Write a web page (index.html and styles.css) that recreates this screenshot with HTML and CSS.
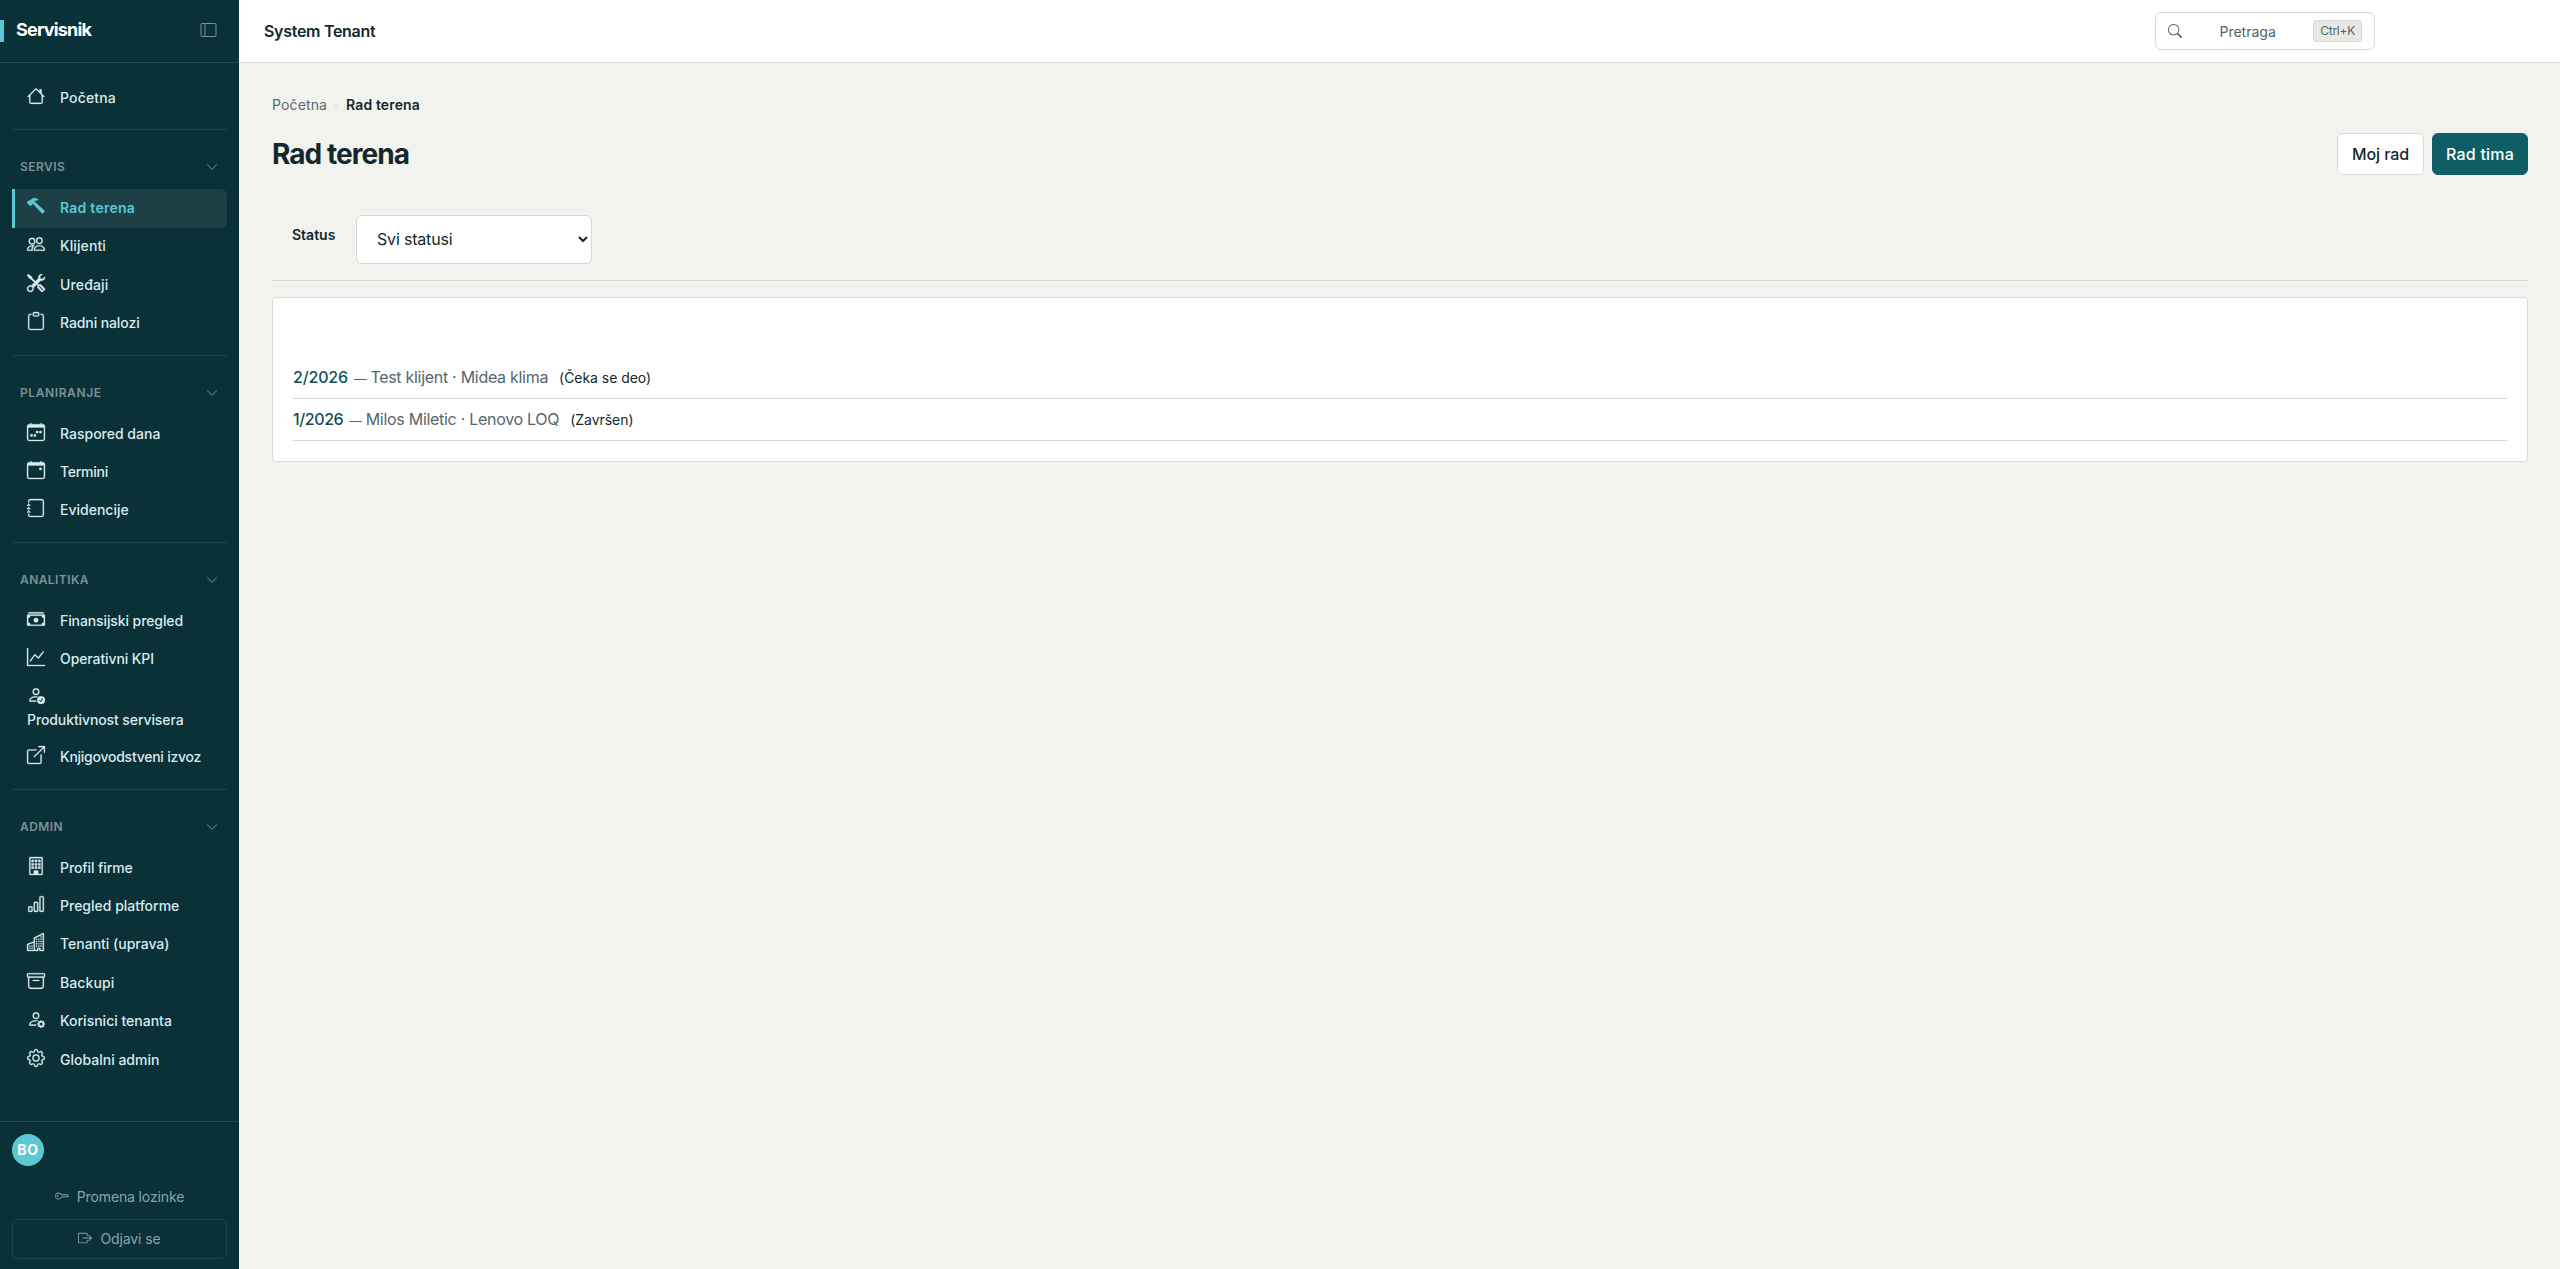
FILE: index.html
```html
<!DOCTYPE html>
<html lang="sr-Latn">
<head>
<meta charset="utf-8">
<title>Rad terena</title>
<link rel="stylesheet" href="styles.css">
</head>
<body>
<svg class="defs" xmlns="http://www.w3.org/2000/svg">
  <symbol id="chevron" viewBox="0 0 16 16"><path fill-rule="evenodd" d="M1.646 4.646a.5.5 0 0 1 .708 0L8 10.293l5.646-5.647a.5.5 0 0 1 .708.708l-6 6a.5.5 0 0 1-.708 0l-6-6a.5.5 0 0 1 0-.708z"/></symbol>
</svg>
<div class="app">
  <aside class="sidebar">
    <div class="brand">
      <span class="brand-mark"></span>
      <span class="brand-name">Servisnik</span>
      <svg class="toggle" viewBox="0 0 16 16"><path d="M0 3a2 2 0 0 1 2-2h12a2 2 0 0 1 2 2v10a2 2 0 0 1-2 2H2a2 2 0 0 1-2-2V3zm5-1v12h9a1 1 0 0 0 1-1V3a1 1 0 0 0-1-1H5zM4 2H2a1 1 0 0 0-1 1v10a1 1 0 0 0 1 1h2V2z"/></svg>
    </div>
    <nav class="nav">
      <section class="group">
        <a class="item"><svg class="icon" viewBox="0 0 16 16"><path fill-rule="evenodd" d="M2 13.5V7h1v6.5a.5.5 0 0 0 .5.5h9a.5.5 0 0 0 .5-.5V7h1v6.5a1.5 1.5 0 0 1-1.5 1.5h-9A1.5 1.5 0 0 1 2 13.5zm11-11V6l-2-2V2.500a.5.5 0 0 1 .5-.5h1a.5.5 0 0 1 .5.5z"/><path fill-rule="evenodd" d="M7.293 1.500a1 1 0 0 1 1.414 0l6.647 6.646a.5.5 0 0 1-.708.708L8 2.207 1.354 8.854a.5.5 0 1 1-.708-.708L7.293 1.500z"/></svg><span class="text wider">Početna</span></a>
      </section>
      <section class="group">
        <h2 class="label">SERVIS<svg class="chev"><use href="#chevron"/></svg></h2>
        <a class="item active"><svg class="icon" viewBox="0 0 16 16"><path d="M9.972 2.508a.5.5 0 0 0-.16-.556l-.178-.129a5 5 0 0 0-2.076-.783C6.215.862 4.504 1.229 2.840 3.133H1.786a.5.5 0 0 0-.354.147L.146 4.567a.5.5 0 0 0 0 .706l2.571 2.579a.5.5 0 0 0 .708 0l1.286-1.290a.5.5 0 0 0 .146-.353V5.570l8.387 8.873A.5.5 0 0 0 14 14.500l1.500-1.500a.5.5 0 0 0 .017-.689l-9.129-8.630c.747-.456 1.772-.839 3.112-.839a.5.5 0 0 0 .472-.334z"/></svg><span class="text">Rad terena</span></a>
        <a class="item"><svg class="icon" viewBox="0 0 16 16"><path d="M15 14s1 0 1-1-1-4-5-4-5 3-5 4 1 1 1 1h8Zm-7.978-1A.261.261 0 0 1 7 12.996c.001-.264.167-1.030.760-1.720C8.312 10.629 9.282 10 11 10c1.717 0 2.687.630 3.240 1.276.593.690.758 1.457.760 1.720l-.008.002a.274.274 0 0 1-.014.002H7.022ZM11 7a2 2 0 1 0 0-4 2 2 0 0 0 0 4Zm3-2a3 3 0 1 1-6 0 3 3 0 0 1 6 0ZM6.936 9.280a5.880 5.880 0 0 0-1.230-.247A7.350 7.350 0 0 0 5 9c-4 0-5 3-5 4 0 .667.333 1 1 1h4.216A2.238 2.238 0 0 1 5 13c0-1.010.377-2.042 1.090-2.904.243-.294.526-.569.846-.816ZM4.920 10A5.493 5.493 0 0 0 4 13H1c0-.260.164-1.030.760-1.724.545-.636 1.492-1.256 3.160-1.275ZM1.500 5.500a3 3 0 1 1 6 0 3 3 0 0 1-6 0Zm3-2a2 2 0 1 0 0 4 2 2 0 0 0 0-4Z"/></svg><span class="text wide">Klijenti</span></a>
        <a class="item"><svg class="icon" viewBox="0 0 16 16"><path d="M1 0 0 1l2.200 3.081a1 1 0 0 0 .815.419h.070a1 1 0 0 1 .708.293l2.675 2.675-2.617 2.654A3.003 3.003 0 0 0 0 13a3 3 0 1 0 5.878-.851l2.654-2.617.968.968-.305.914a1 1 0 0 0 .242 1.023l3.270 3.270a.997.997 0 0 0 1.414 0l1.586-1.586a.997.997 0 0 0 0-1.414l-3.270-3.270a1 1 0 0 0-1.023-.242L10.500 9.500l-.960-.960 2.680-2.643A3.005 3.005 0 0 0 16 3c0-.269-.035-.530-.102-.777l-2.140 2.141L12 4l-.364-1.757L13.777.102a3 3 0 0 0-3.675 3.680L7.462 6.460 4.793 3.793a1 1 0 0 1-.293-.707v-.071a1 1 0 0 0-.419-.814L1 0Zm9.646 10.646a.5.5 0 0 1 .708 0l2.914 2.915a.5.5 0 0 1-.707.707l-2.915-2.914a.5.5 0 0 1 0-.708ZM3 11l.471.242.529.026.287.445.445.287.026.529L5 13l-.242.471-.026.529-.445.287-.287.445-.529.026L3 15l-.471-.242L2 14.732l-.287-.445L1.268 14l-.026-.529L1 13l.242-.471.026-.529.445-.287.287-.445.529-.026L3 11Z"/></svg><span class="text wider">Uređaji</span></a>
        <a class="item"><svg class="icon" viewBox="0 0 16 16"><path d="M4 1.500H3a2 2 0 0 0-2 2V14a2 2 0 0 0 2 2h10a2 2 0 0 0 2-2V3.500a2 2 0 0 0-2-2h-1v1h1a1 1 0 0 1 1 1V14a1 1 0 0 1-1 1H3a1 1 0 0 1-1-1V3.500a1 1 0 0 1 1-1h1v-1z"/><path d="M9.500 1a.5.5 0 0 1 .5.5v1a.5.5 0 0 1-.5.5h-3a.5.5 0 0 1-.5-.5v-1a.5.5 0 0 1 .5-.5h3zm-3-1A1.500 1.500 0 0 0 5 1.500v1A1.500 1.500 0 0 0 6.500 4h3A1.500 1.500 0 0 0 11 2.500v-1A1.500 1.500 0 0 0 9.500 0h-3z"/></svg><span class="text tight">Radni nalozi</span></a>
      </section>
      <section class="group">
        <h2 class="label spread">PLANIRANJE<svg class="chev"><use href="#chevron"/></svg></h2>
        <a class="item"><svg class="icon" viewBox="0 0 16 16"><path d="M11 7.500a.5.5 0 0 1 .5-.5h1a.5.5 0 0 1 .5.5v1a.5.5 0 0 1-.5.5h-1a.5.5 0 0 1-.5-.5v-1zm-3 0a.5.5 0 0 1 .5-.5h1a.5.5 0 0 1 .5.5v1a.5.5 0 0 1-.5.5h-1a.5.5 0 0 1-.5-.5v-1zm-2 3a.5.5 0 0 1 .5-.5h1a.5.5 0 0 1 .5.5v1a.5.5 0 0 1-.5.5h-1a.5.5 0 0 1-.5-.5v-1zm-3 0a.5.5 0 0 1 .5-.5h1a.5.5 0 0 1 .5.5v1a.5.5 0 0 1-.5.5h-1a.5.5 0 0 1-.5-.5v-1z"/><path d="M3.500 0a.5.5 0 0 1 .5.5V1h8V.5a.5.5 0 0 1 1 0V1h1a2 2 0 0 1 2 2v11a2 2 0 0 1-2 2H2a2 2 0 0 1-2-2V3a2 2 0 0 1 2-2h1V.5a.5.5 0 0 1 .5-.5zM1 4v10a1 1 0 0 0 1 1h12a1 1 0 0 0 1-1V4H1z"/></svg><span class="text">Raspored dana</span></a>
        <a class="item"><svg class="icon" viewBox="0 0 16 16"><path d="M11 6.500a.5.5 0 0 1 .5-.5h1a.5.5 0 0 1 .5.5v1a.5.5 0 0 1-.5.5h-1a.5.5 0 0 1-.5-.5v-1z"/><path d="M3.500 0a.5.5 0 0 1 .5.5V1h8V.5a.5.5 0 0 1 1 0V1h1a2 2 0 0 1 2 2v11a2 2 0 0 1-2 2H2a2 2 0 0 1-2-2V3a2 2 0 0 1 2-2h1V.5a.5.5 0 0 1 .5-.5zM1 4v10a1 1 0 0 0 1 1h12a1 1 0 0 0 1-1V4H1z"/></svg><span class="text tighter">Termini</span></a>
        <a class="item"><svg class="icon" viewBox="0 0 16 16"><path d="M3 0h10a2 2 0 0 1 2 2v12a2 2 0 0 1-2 2H3a2 2 0 0 1-2-2v-1h1v1a1 1 0 0 0 1 1h10a1 1 0 0 0 1-1V2a1 1 0 0 0-1-1H3a1 1 0 0 0-1 1v1H1V2a2 2 0 0 1 2-2z"/><path d="M1 5v-.5a.5.5 0 0 1 1 0V5h.5a.5.5 0 0 1 0 1h-2a.5.5 0 0 1 0-1H1zm0 3v-.5a.5.5 0 0 1 1 0V8h.5a.5.5 0 0 1 0 1h-2a.5.5 0 0 1 0-1H1zm0 3v-.5a.5.5 0 0 1 1 0v.5h.5a.5.5 0 0 1 0 1h-2a.5.5 0 0 1 0-1H1z"/></svg><span class="text">Evidencije</span></a>
      </section>
      <section class="group">
        <h2 class="label">ANALITIKA<svg class="chev"><use href="#chevron"/></svg></h2>
        <a class="item"><svg class="icon" viewBox="0 0 16 16"><path d="M1 3a1 1 0 0 1 1-1h12a1 1 0 0 1 1 1H1zm7 8a2 2 0 1 0 0-4 2 2 0 0 0 0 4z"/><path d="M0 5a1 1 0 0 1 1-1h14a1 1 0 0 1 1 1v8a1 1 0 0 1-1 1H1a1 1 0 0 1-1-1V5zm3 0a2 2 0 0 1-2 2v4a2 2 0 0 1 2 2h10a2 2 0 0 1 2-2V7a2 2 0 0 1-2-2H3z"/></svg><span class="text tight">Finansijski pregled</span></a>
        <a class="item"><svg class="icon" viewBox="0 0 16 16"><path fill-rule="evenodd" d="M0 0h1v15h15v1H0V0Zm14.817 3.113a.5.5 0 0 1 .070.704l-4.500 5.500a.5.5 0 0 1-.740.037L7.060 6.767l-3.656 5.027a.5.5 0 0 1-.808-.588l4-5.500a.5.5 0 0 1 .758-.060l2.609 2.610 4.150-5.073a.5.5 0 0 1 .704-.070Z"/></svg><span class="text tight">Operativni KPI</span></a>
        <a class="item stacked"><svg class="icon" viewBox="0 0 16 16"><path d="M12.500 16a3.500 3.500 0 1 0 0-7 3.500 3.500 0 0 0 0 7Zm1.679-4.493-1.335 2.226a.75.75 0 0 1-1.174.144l-.774-.773a.5.5 0 0 1 .708-.708l.547.548 1.170-1.951a.5.5 0 1 1 .858.514ZM11 5a3 3 0 1 1-6 0 3 3 0 0 1 6 0ZM8 7a2 2 0 1 0 0-4 2 2 0 0 0 0 4Z"/><path d="M8.256 14a4.474 4.474 0 0 1-.229-1.004H3c.001-.246.154-.986.832-1.664C4.484 10.680 5.711 10 8 10c.260 0 .507.009.740.025.226-.341.496-.650.804-.918C9.077 9.038 8.564 9 8 9c-5 0-6 3-6 4s1 1 1 1h5.256Z"/></svg><span class="text tight">Produktivnost servisera</span></a>
        <a class="item"><svg class="icon" viewBox="0 0 16 16"><path fill-rule="evenodd" d="M8.636 3.500a.5.5 0 0 0-.5-.5H1.500A1.500 1.500 0 0 0 0 4.500v10A1.500 1.500 0 0 0 1.500 16h10a1.500 1.500 0 0 0 1.500-1.500V7.864a.5.5 0 0 0-1 0V14.500a.5.5 0 0 1-.5.5h-10a.5.5 0 0 1-.5-.5v-10a.5.5 0 0 1 .5-.5h6.636a.5.5 0 0 0 .5-.5z"/><path fill-rule="evenodd" d="M16 .5a.5.5 0 0 0-.5-.5h-5a.5.5 0 0 0 0 1h3.793L6.146 9.146a.5.5 0 1 0 .708.708L15 1.707V5.500a.5.5 0 0 0 1 0v-5z"/></svg><span class="text tighter">Knjigovodstveni izvoz</span></a>
      </section>
      <section class="group">
        <h2 class="label">ADMIN<svg class="chev"><use href="#chevron"/></svg></h2>
        <a class="item"><svg class="icon" viewBox="0 0 16 16"><path fill-rule="evenodd" d="M3 0h10a1 1 0 0 1 1 1v14a1 1 0 0 1-1 1H3a1 1 0 0 1-1-1V1a1 1 0 0 1 1-1zm0 1v14h3v-2.500a.5.5 0 0 1 .5-.5h3a.5.5 0 0 1 .5.5V15h3V1H3z"/><path d="M4 2.500h2v2H4zm3 0h2v2H7zm3 0h2v2h-2zm-6 3h2v2H4zm3 0h2v2H7zm3 0h2v2h-2zm-6 3h2v2H4zm3 0h2v2H7zm3 0h2v2h-2zM6.500 12.500h3V15h-3z"/></svg><span class="text tight">Profil firme</span></a>
        <a class="item"><svg class="icon" viewBox="0 0 16 16"><path d="M4 11H2v3h2v-3zm5-4H7v7h2V7zm5-5v12h-2V2h2zm-2-1a1 1 0 0 0-1 1v12a1 1 0 0 0 1 1h2a1 1 0 0 0 1-1V2a1 1 0 0 0-1-1h-2zM6 7a1 1 0 0 1 1-1h2a1 1 0 0 1 1 1v7a1 1 0 0 1-1 1H7a1 1 0 0 1-1-1V7zm-5 4a1 1 0 0 1 1-1h2a1 1 0 0 1 1 1v3a1 1 0 0 1-1 1H2a1 1 0 0 1-1-1v-3z"/></svg><span class="text">Pregled platforme</span></a>
        <a class="item"><svg class="icon" viewBox="0 0 16 16"><path fill-rule="evenodd" d="M14.763.075A.5.5 0 0 1 15 .5v15a.5.5 0 0 1-.5.5h-3a.5.5 0 0 1-.5-.5V14h-1v1.500a.5.5 0 0 1-.5.5h-9a.5.5 0 0 1-.5-.5V10a.5.5 0 0 1 .342-.474L6 7.640V4.500a.5.5 0 0 1 .276-.447l8-4a.5.5 0 0 1 .487.022zM6 8.694 1 10.360V15h5V8.694zM7 15h2v-1.500a.5.5 0 0 1 .5-.5h2a.5.5 0 0 1 .5.5V15h2V1.309l-7 3.500V15z"/><path d="M2 11h1v1H2v-1zm2 0h1v1H4v-1zm-2 2h1v1H2v-1zm2 0h1v1H4v-1zm4-4h1v1H8V9zm2 0h1v1h-1V9zm-2 2h1v1H8v-1zm2 0h1v1h-1v-1zm2-2h1v1h-1V9zm0 2h1v1h-1v-1zM8 7h1v1H8V7zm2 0h1v1h-1V7zm2 0h1v1h-1V7zM8 5h1v1H8V5zm2 0h1v1h-1V5zm2 0h1v1h-1V5zm0-2h1v1h-1V3z"/></svg><span class="text">Tenanti (uprava)</span></a>
        <a class="item"><svg class="icon" viewBox="0 0 16 16"><path d="M0 2a1 1 0 0 1 1-1h14a1 1 0 0 1 1 1v2a1 1 0 0 1-1 1v7.500a2.500 2.500 0 0 1-2.500 2.500h-9A2.500 2.500 0 0 1 1 12.500V5a1 1 0 0 1-1-1V2zm2 3v7.500A1.500 1.500 0 0 0 3.500 14h9a1.500 1.500 0 0 0 1.500-1.500V5H2zm13-3H1v2h14V2zM5 7.500a.5.5 0 0 1 .5-.5h5a.5.5 0 0 1 0 1h-5a.5.5 0 0 1-.5-.5z"/></svg><span class="text wide">Backupi</span></a>
        <a class="item"><svg class="icon" viewBox="0 0 16 16"><path d="M11 5a3 3 0 1 1-6 0 3 3 0 0 1 6 0ZM8 7a2 2 0 1 0 0-4 2 2 0 0 0 0 4Zm.256 7a4.474 4.474 0 0 1-.229-1.004H3c.001-.246.154-.986.832-1.664C4.484 10.680 5.711 10 8 10c.260 0 .507.009.740.025.226-.341.496-.650.804-.918C9.077 9.038 8.564 9 8 9c-5 0-6 3-6 4s1 1 1 1h5.256Zm3.630-4.540c.180-.613 1.048-.613 1.229 0l.043.148a.64.64 0 0 0 .921.382l.136-.074c.561-.306 1.175.308.870.869l-.075.136a.64.64 0 0 0 .382.920l.149.045c.612.180.612 1.048 0 1.229l-.150.043a.64.64 0 0 0-.380.921l.074.136c.305.561-.309 1.175-.870.870l-.136-.075a.64.64 0 0 0-.920.382l-.045.149c-.180.612-1.048.612-1.229 0l-.043-.150a.64.64 0 0 0-.921-.380l-.136.074c-.561.305-1.175-.309-.870-.870l.075-.136a.64.64 0 0 0-.382-.920l-.148-.045c-.613-.180-.613-1.048 0-1.229l.148-.043a.64.64 0 0 0 .382-.921l-.074-.136c-.306-.561.308-1.175.869-.870l.136.075a.64.64 0 0 0 .920-.382l.045-.148ZM14 12.500a1.500 1.500 0 1 0-3 0 1.500 1.500 0 0 0 3 0Z"/></svg><span class="text">Korisnici tenanta</span></a>
        <a class="item"><svg class="icon" viewBox="0 0 16 16"><path d="M8 4.754a3.246 3.246 0 1 0 0 6.492 3.246 3.246 0 0 0 0-6.492zM5.754 8a2.246 2.246 0 1 1 4.492 0 2.246 2.246 0 0 1-4.492 0z"/><path d="M9.796 1.343c-.527-1.790-3.065-1.790-3.592 0l-.094.319a.873.873 0 0 1-1.255.520l-.292-.160c-1.640-.892-3.433.902-2.540 2.541l.159.292a.873.873 0 0 1-.520 1.255l-.319.094c-1.790.527-1.790 3.065 0 3.592l.319.094a.873.873 0 0 1 .520 1.255l-.160.292c-.892 1.640.901 3.434 2.541 2.540l.292-.159a.873.873 0 0 1 1.255.520l.094.319c.527 1.790 3.065 1.790 3.592 0l.094-.319a.873.873 0 0 1 1.255-.520l.292.160c1.640.893 3.434-.902 2.540-2.541l-.159-.292a.873.873 0 0 1 .520-1.255l.319-.094c1.790-.527 1.790-3.065 0-3.592l-.319-.094a.873.873 0 0 1-.520-1.255l.160-.292c.893-1.640-.902-3.433-2.541-2.540l-.292.159a.873.873 0 0 1-1.255-.520l-.094-.319zm-2.633.283c.246-.835 1.428-.835 1.674 0l.094.319a1.873 1.873 0 0 0 2.693 1.115l.291-.160c.764-.415 1.600.420 1.184 1.185l-.159.292a1.873 1.873 0 0 0 1.116 2.692l.318.094c.835.246.835 1.428 0 1.674l-.319.094a1.873 1.873 0 0 0-1.115 2.693l.160.291c.415.764-.420 1.600-1.185 1.184l-.291-.159a1.873 1.873 0 0 0-2.693 1.116l-.094.318c-.246.835-1.428.835-1.674 0l-.094-.319a1.873 1.873 0 0 0-2.692-1.115l-.292.160c-.764.415-1.600-.420-1.184-1.185l.159-.291A1.873 1.873 0 0 0 1.945 8.930l-.319-.094c-.835-.246-.835-1.428 0-1.674l.319-.094A1.873 1.873 0 0 0 3.060 4.377l-.160-.292c-.415-.764.420-1.600 1.185-1.184l.292.159a1.873 1.873 0 0 0 2.692-1.115l.094-.319z"/></svg><span class="text">Globalni admin</span></a>
      </section>
    </nav>
    <div class="account">
      <span class="avatar">BO</span>
      <a class="account-link"><svg class="icon-sm" viewBox="0 0 16 16"><path d="M0 8a4 4 0 0 1 7.465-2H14a.5.5 0 0 1 .354.146l1.500 1.500a.5.5 0 0 1 0 .708l-1.500 1.500a.5.5 0 0 1-.708 0L13 9.207l-.646.647a.5.5 0 0 1-.708 0L11 9.207l-.646.647a.5.5 0 0 1-.708 0L9 9.207l-.646.647A.5.5 0 0 1 8 10h-.535A4 4 0 0 1 0 8zm4-3a3 3 0 1 0 2.712 4.285A.5.5 0 0 1 7.163 9h.630l.853-.854a.5.5 0 0 1 .708 0l.646.647.646-.647a.5.5 0 0 1 .708 0l.646.647.646-.647a.5.5 0 0 1 .708 0l.646.647.793-.793-1-1h-6.630a.5.5 0 0 1-.451-.285A3 3 0 0 0 4 5z"/><path d="M4 8a1 1 0 1 1-2 0 1 1 0 0 1 2 0z"/></svg>Promena lozinke</a>
      <button class="logout"><svg class="icon-sm" viewBox="0 0 16 16"><path fill-rule="evenodd" d="M10 12.500a.5.5 0 0 1-.5.5h-8a.5.5 0 0 1-.5-.5v-9a.5.5 0 0 1 .5-.5h8a.5.5 0 0 1 .5.5v2a.5.5 0 0 0 1 0v-2A1.500 1.500 0 0 0 9.500 2h-8A1.500 1.500 0 0 0 0 3.500v9A1.500 1.500 0 0 0 1.500 14h8a1.500 1.500 0 0 0 1.500-1.500v-2a.5.5 0 0 0-1 0v2z"/><path fill-rule="evenodd" d="M15.854 8.354a.5.5 0 0 0 0-.708l-3-3a.5.5 0 0 0-.708.708L14.293 7.500H5.500a.5.5 0 0 0 0 1h8.793l-2.147 2.146a.5.5 0 0 0 .708.708l3-3z"/></svg>Odjavi se</button>
    </div>
  </aside>
  <div class="page">
    <header class="topbar">
      <span class="tenant">System Tenant</span>
      <button class="search">
        <svg class="icon-sm" viewBox="0 0 16 16"><path d="M11.742 10.344a6.500 6.500 0 1 0-1.397 1.398h-.001c.030.040.062.078.098.115l3.850 3.850a1 1 0 0 0 1.415-1.414l-3.850-3.850a1.007 1.007 0 0 0-.115-.100zM12 6.500a5.500 5.500 0 1 1-11 0 5.500 5.500 0 0 1 11 0z"/></svg>
        <span>Pretraga</span>
        <kbd>Ctrl+K</kbd>
      </button>
    </header>
    <main class="content">
      <div class="crumbs"><a>Početna</a><i class="sep"></i><b>Rad terena</b></div>
      <div class="heading">
        <h1>Rad terena</h1>
        <div class="actions"><button class="btn">Moj rad</button><button class="btn primary">Rad tima</button></div>
      </div>
      <form class="filters">
        <label for="status">Status</label>
        <select id="status"><option>Svi statusi</option></select>
      </form>
      <div class="card">
        <ul class="orders">
          <li><a class="num">2/2026</a><span class="who"><span class="dash">—</span> Test klijent · Midea klima</span><small>(Čeka se deo)</small></li>
          <li><a class="num narrow">1/2026</a><span class="who"><span class="dash">—</span> Milos Miletic · Lenovo LOQ</span><small>(Završen)</small></li>
        </ul>
      </div>
    </main>
  </div>
</div>
</body>
</html>
```
FILE: styles.css
```css
* { box-sizing: border-box; }
body {
  margin: 0;
  font-family: Inter, "Liberation Sans", sans-serif;
  font-size: 16px;
  line-height: 1.5;
  color: #14282c;
  background: #f2f2ee;
}
button, select { font: inherit; color: inherit; }
svg { fill: currentColor; flex: none; display: block; }
.defs { display: none; }
.app { display: flex; height: 100vh; }

/* Sidebar */
.sidebar {
  width: 239px;
  flex: none;
  display: flex;
  flex-direction: column;
  background: #0a3038;
  color: #d9eaec;
}
.brand {
  height: 63px;
  display: flex;
  align-items: center;
  padding-right: 22px;
  border-bottom: 1px solid #25474e;
}
.brand-mark { width: 4px; height: 22px; background: #5bc8d3; }
.brand-name {
  flex: 1;
  padding: 0 0 2px 12px;
  font-size: 18px;
  font-weight: 700;
  letter-spacing: -0.8px;
  color: #fff;
  line-height: 24px;
}
.toggle { width: 17px; height: 16px; margin-bottom: 2px; color: #7a9599; }
.nav { flex: 1; padding: 16px 12px 0; }
.group { padding-bottom: 12px; }
.group + .group { border-top: 1px solid #21444b; }
.group:last-child { padding-bottom: 0; }
.label {
  margin: 0;
  height: 59px;
  padding: 15px 9px 0 8px;
  display: flex;
  align-items: center;
  justify-content: space-between;
  font-size: 12px;
  font-weight: 600;
  letter-spacing: 0.43px;
  color: #7c9397;
}
.label.spread { letter-spacing: 0.6px; }
.chev { width: 12px; height: 12px; color: #5d7c81; stroke: currentColor; stroke-width: 0.4; }
.item {
  height: 38.4px;
  display: flex;
  align-items: center;
  gap: 15px;
  padding-left: 12px;
  border-left: 3px solid transparent;
  border-radius: 6px;
  font-size: 14px;
  font-weight: 500;
  line-height: 21px;
}
.icon { width: 18px; height: 18px; margin-bottom: 5px; stroke: currentColor; stroke-width: 0.25; overflow: visible; }
.text { padding-bottom: 2px; }
.item.active {
  background: #1d4047;
  border-left-color: #5bc8d3;
  border-radius: 0 6px 6px 0;
  color: #5bc8d3;
  font-weight: 600;
  letter-spacing: 0.25px;
}
.item.stacked {
  height: 59.6px;
  flex-direction: column;
  align-items: flex-start;
  justify-content: center;
  gap: 0;
}
.text.wide { letter-spacing: 0.1px; }
.text.wider { letter-spacing: 0.15px; }
.text.tight { letter-spacing: -0.1px; }
.text.tighter { letter-spacing: -0.25px; }
.account {
  height: 148px;
  padding: 12px 12px 10px;
  border-top: 1px solid #25474e;
  display: flex;
  flex-direction: column;
  font-size: 14px;
  letter-spacing: -0.13px;
  color: #8aa5a9;
}
.avatar {
  width: 32px;
  height: 32px;
  padding-bottom: 1px;
  display: grid;
  place-items: center;
  border-radius: 50%;
  background: #5bc8d3;
  color: #fff;
  font-size: 14px;
  font-weight: 700;
  letter-spacing: 0.8px;
}
.account-link {
  flex: 1;
  display: flex;
  align-items: center;
  justify-content: center;
  gap: 8px;
  padding-top: 8px;
}
.logout {
  height: 40px;
  display: flex;
  align-items: center;
  justify-content: center;
  gap: 8px;
  padding-bottom: 3px;
  background: none;
  border: 1px solid #21444b;
  border-radius: 6px;
  letter-spacing: -0.11px;
}
.icon-sm { width: 14px; height: 14px; margin-bottom: 1px; }

/* Top bar */
.page { flex: 1; display: flex; flex-direction: column; }
.topbar {
  height: 63px;
  display: flex;
  align-items: center;
  justify-content: space-between;
  padding: 0 185px 0 25px;
  background: #fff;
  border-bottom: 1px solid #d8d9d7;
}
.tenant { padding-bottom: 1px; font-weight: 600; letter-spacing: -0.3px; }
.search {
  width: 220px;
  height: 38px;
  display: flex;
  align-items: center;
  justify-content: space-between;
  padding: 0 12px;
  background: #fff;
  border: 1px solid #d8d9d7;
  border-radius: 6px;
  font-size: 14px;
  color: #52646a;
}
kbd {
  height: 22px;
  padding: 0 6px;
  border: 1px solid #d8d9d4;
  border-radius: 3px;
  background: #e8e9e3;
  font: 12px/20px Inter, sans-serif;
  letter-spacing: -0.25px;
}

/* Content */
.content { flex: 1; padding: 31px 32px 0 33px; }
.crumbs { display: flex; align-items: center; height: 21px; font-size: 14px; color: #5b6b70; letter-spacing: 0.13px; }
.crumbs b { font-weight: 600; color: #14282c; }
.sep { width: 2px; height: 4px; margin: 0 9px 0 8px; background: #e2e3e0; }
.heading { display: flex; justify-content: space-between; align-items: center; margin-top: 18px; height: 42px; }
h1 { margin: 0; font-size: 28px; font-weight: 700; letter-spacing: -0.95px; }
.actions { display: flex; gap: 8px; }
.btn {
  width: 87px;
  height: 42px;
  padding: 0 0 1px;
  border: 1px solid #d8d9d7;
  border-radius: 6px;
  background: #fff;
  font-weight: 500;
  letter-spacing: -0.08px;
}
.btn.primary { width: 96px; border-color: #0f5e66; background: #0f5e66; color: #fff; letter-spacing: 0.2px; }
.filters {
  display: flex;
  align-items: flex-start;
  margin-top: 24px;
  height: 82px;
  padding: 16px 20px 0;
  border-bottom: 1px solid #dadbd8;
}
label { width: 64px; padding-top: 9px; font-size: 14px; font-weight: 600; }
select {
  width: 236px;
  height: 49px;
  padding: 0 0 1px 16px;
  border: 1px solid #d8d9d7;
  border-radius: 6px;
  background: #fff;
  letter-spacing: -0.18px;
}
.card {
  margin-top: 16px;
  padding: 59px 20px 20px;
  background: #fff;
  border: 1px solid #d8d9d7;
  border-radius: 4px;
}
.orders { margin: 0; padding: 0; list-style: none; }
.orders li {
  height: 42px;
  display: flex;
  align-items: baseline;
  padding-top: 8px;
  border-bottom: 1px solid #d8d9d7;
}
.num { color: #0f4f57; font-weight: 500; letter-spacing: -0.16px; }
.num.narrow { letter-spacing: -0.4px; }
.who { margin: 0 11px 0 6px; color: #56666b; letter-spacing: -0.29px; }
.dash { font-size: 12.5px; }
small { font-size: 14px; letter-spacing: -0.04px; }
```
